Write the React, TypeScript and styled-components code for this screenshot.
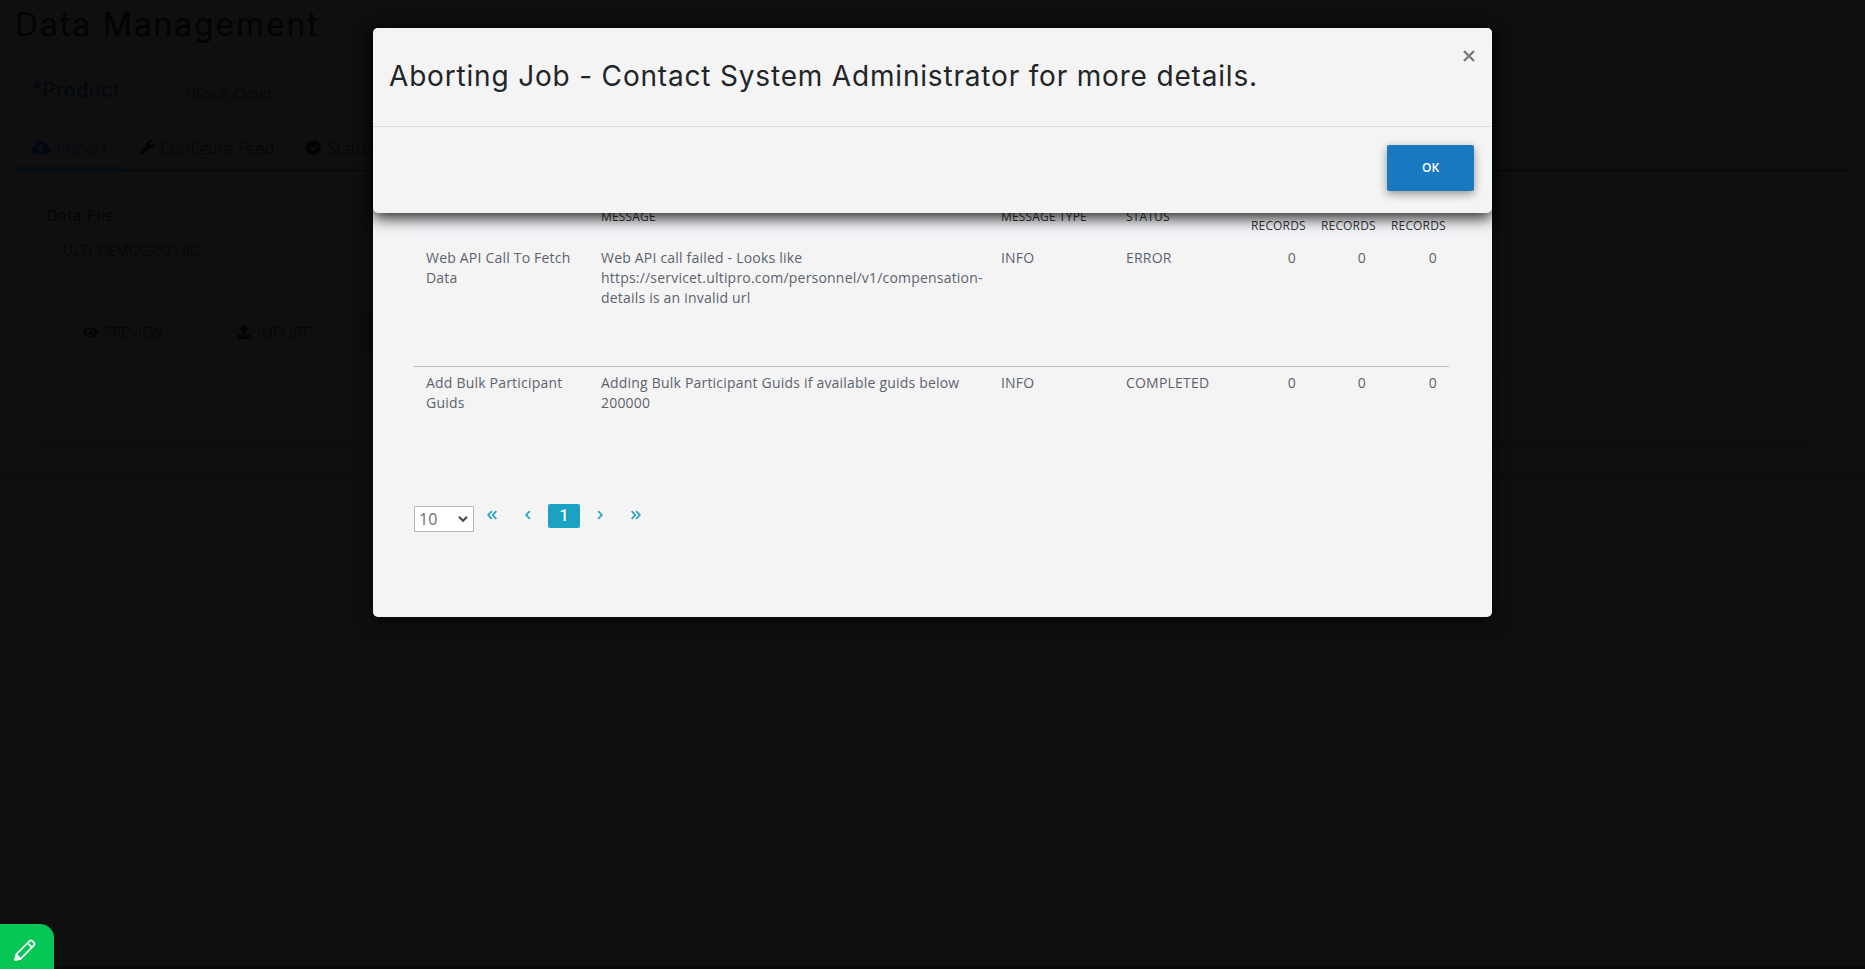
import React from "react";
import styled, { createGlobalStyle } from "styled-components";
import { FaCloudUploadAlt, FaWrench, FaCheckCircle, FaEye, FaUpload } from "react-icons/fa";

const GlobalStyle = createGlobalStyle`
  * { box-sizing: border-box; }
  html, body { margin: 0; background: #0f0f0f; overflow: hidden; }
  body { font-family: "Open Sans", "Noto Sans", sans-serif; }
`;

const Screen = styled.div`
  position: relative;
  width: 100vw;
  height: 100vh;
  overflow: hidden;
  background: #0f0f0f;
  color: #030303;
  box-shadow: inset 0 -2px 0 #090909;
`;

const Page = styled.main`
  height: 479px;
  padding: 0 16px;
  border-bottom: 2px solid #0c0c0c;
`;

const PageTitle = styled.h1`
  margin: 0;
  height: 66px;
  font: 400 32px/50px Inter, sans-serif;
  letter-spacing: 1.85px;
  text-indent: -1px;
`;

const ProductRow = styled.div`
  display: flex;
  height: 60px;
  padding-left: 16px;
`;

const ProductLabel = styled.label`
  width: 154px;
  font: 400 20px/48px Inter, sans-serif;
  letter-spacing: 0.5px;
  color: #02060d;
`;

const ProductValue = styled.span`
  font: 300 14px/56px "Open Sans", sans-serif;
  letter-spacing: 0.3px;
`;

const TabBar = styled.nav`
  display: flex;
  height: 45px;
  border-bottom: 1px solid #060606;
`;

const Tab = styled.div<{ $active?: boolean }>`
  display: flex;
  align-items: center;
  gap: 6px;
  height: 45px;
  padding: 2px 16px 0;
  font-size: 16px;
  font-weight: 300;
  letter-spacing: 0.32px;
  color: ${(p) => (p.$active ? "#020812" : "#030303")};
  border-bottom: ${(p) => (p.$active ? "4px solid #040b14" : "4px solid transparent")};
  svg { flex: none; }
`;

const FormPanel = styled.section`
  padding: 30px 41px 0 24px;
  height: 275px;
`;

const FieldLabel = styled.div`
  padding-left: 7px;
  font: 300 15px/30px Inter, sans-serif;
  letter-spacing: 0.8px;
`;

const FieldValue = styled.div`
  padding-left: 23px;
  margin-top: 5px;
  font: 300 14px/30px "Open Sans", sans-serif;
  letter-spacing: 0.27px;
`;

const FormActions = styled.div`
  display: flex;
  gap: 74px;
  height: 54px;
  margin-top: 47px;
  padding-left: 43px;
`;

const ActionLink = styled.div`
  display: flex;
  align-items: center;
  gap: 6px;
  height: 38px;
  font-size: 14px;
  font-weight: 300;
  letter-spacing: 0.4px;
`;

const ActionFill = styled.div`
  width: 80px;
  height: 38px;
  margin-left: -24px;
  background: #0c0c0c;
`;

const EmptyPanel = styled.div`
  height: 80px;
  border-top: 2px solid #0c0c0c;
  border-bottom: 2px solid #0c0c0c;
`;

const DetailsDialog = styled.section`
  position: absolute;
  top: 28px;
  left: 373px;
  width: 1119px;
  height: 589px;
  padding: 150px 43px 0 41px;
  border-radius: 5px;
  background: #f4f4f4;
  box-shadow: 0 4px 16px 2px rgba(0, 0, 0, 0.55);
`;

const columns = "175px 400px 125px 125px 70px 70px 70px";

const HeaderRow = styled.div`
  display: grid;
  grid-template-columns: ${columns};
  align-items: center;
  height: 63px;
  background: #f3f4f8;
  color: #333539;
  font-size: 12px;
  line-height: 18px;
  letter-spacing: 0.16px;
  padding-top: 14px;
`;

const HeaderCell = styled.div`
  padding-left: 12px;
  white-space: nowrap;
`;

const BodyRow = styled.div<{ $last?: boolean }>`
  display: grid;
  grid-template-columns: ${columns};
  height: ${(p) => (p.$last ? 135 : 126)}px;
  padding-top: ${(p) => (p.$last ? 6 : 7)}px;
  border-bottom: 1px solid ${(p) => (p.$last ? "transparent" : "#b9bbbd")};
  color: #5c636e;
  font-size: 14px;
  line-height: 20px;
  letter-spacing: 0.2px;
`;

const Cell = styled.div<{ $numeric?: boolean }>`
  padding: 0 ${(p) => (p.$numeric ? 13 : 0)}px 0 12px;
  text-align: ${(p) => (p.$numeric ? "right" : "left")};
  white-space: pre-line;
  &:last-child { padding-right: 12px; }
`;

const Paginator = styled.footer`
  display: flex;
  align-items: flex-start;
  padding-top: 2px;
`;

const PageSize = styled.div`
  display: flex;
  align-items: center;
  justify-content: space-between;
  width: 60px;
  height: 26px;
  margin-top: 2px;
  padding: 0 5px 0 4px;
  border: 1px solid #b8b8b8;
  background: #fff;
  color: #6a6d72;
  font-size: 16px;
  line-height: 24px;
`;

const PageButton = styled.button`
  display: flex;
  align-items: center;
  justify-content: center;
  width: 36px;
  height: 22px;
  padding: 0;
  border: 0;
  background: none;
  color: #2aa0c6;
`;

const CurrentPage = styled(PageButton)`
  width: 32px;
  height: 24px;
  margin: 0 2px;
  border-radius: 2px;
  background: #1ba1c1;
  color: #fff;
  font: 500 16px/24px Roboto, sans-serif;
`;

const AlertDialog = styled.section`
  position: absolute;
  top: 28px;
  left: 373px;
  width: 1119px;
  height: 185px;
  border-radius: 5px;
  background: #f4f4f4;
  box-shadow: 0 5px 15px rgba(0, 0, 0, 0.85);
`;

const AlertHeader = styled.header`
  display: flex;
  justify-content: space-between;
  height: 99px;
  padding: 17px 17px 0 16px;
  border-bottom: 1px solid #dadbdc;
`;

const AlertTitle = styled.h2`
  margin: 0;
  font: 400 28px/62px Inter, sans-serif;
  letter-spacing: 0.82px;
  color: #212529;
  white-space: nowrap;
`;

const CloseButton = styled.button`
  width: 12px;
  height: 24px;
  padding: 0;
  border: 0;
  background: none;
  color: #7a7a7a;
`;

const AlertFooter = styled.footer`
  display: flex;
  justify-content: flex-end;
  padding: 18px 18px 0;
`;

const OkButton = styled.button`
  width: 87px;
  height: 46px;
  padding: 0 0 2px;
  border: 0;
  border-radius: 2px;
  background: #1878c0;
  color: #fff;
  font: 600 12px "Open Sans", sans-serif;
  box-shadow: 0 3px 10px rgba(0, 0, 0, 0.4);
`;

const EditButton = styled.button`
  position: absolute;
  left: 0;
  bottom: 0;
  display: flex;
  align-items: center;
  justify-content: center;
  width: 54px;
  height: 45px;
  padding: 6px 5px 0 0;
  border: 0;
  border-radius: 0 14px 0 0;
  background: #06c755;
  color: #fff;
`;

const Chevrons = ({ flip, double }: { flip?: boolean; double?: boolean }) => (
  <svg width={double ? 10 : 6} height="10" viewBox={double ? "0 0 10 10" : "0 0 6 10"} fill="none" stroke="currentColor" strokeWidth="1.7" transform={flip ? "scale(-1 1)" : undefined}>
    <path d="M4.8 1.2 1.2 5l3.6 3.8" />
    {double && <path d="M9.3 1.2 5.7 5l3.6 3.8" />}
  </svg>
);

const rows = [
  ["Web API Call To Fetch Data", "Web API call failed - Looks like\nhttps://servicet.ultipro.com/personnel/v1/compensation-\ndetails is an invalid url", "INFO", "ERROR", "0", "0", "0"],
  ["Add Bulk Participant Guids", "Adding Bulk Participant Guids if available guids below 200000", "INFO", "COMPLETED", "0", "0", "0"],
];

const headers = ["", "MESSAGE", "MESSAGE TYPE", "STATUS", <><br />RECORDS</>, <><br />RECORDS</>, <><br />RECORDS</>];

export default function App() {
  return (
    <Screen>
      <GlobalStyle />
      <Page>
        <PageTitle>Data Management</PageTitle>
        <ProductRow>
          <ProductLabel>*Product</ProductLabel>
          <ProductValue>HRsoft Cloud</ProductValue>
        </ProductRow>
        <TabBar>
          <Tab $active><FaCloudUploadAlt size={19} />Import</Tab>
          <Tab><FaWrench size={15} />Configure Feed</Tab>
          <Tab><FaCheckCircle size={15} />Status</Tab>
        </TabBar>
        <FormPanel>
          <FieldLabel>Data File</FieldLabel>
          <FieldValue>ULTI_DEMOGRAPHIC</FieldValue>
          <FormActions>
            <ActionLink><FaEye size={15} />PREVIEW</ActionLink>
            <ActionLink><FaUpload size={14} />IMPORT</ActionLink>
            <ActionFill />
          </FormActions>
          <EmptyPanel />
        </FormPanel>
      </Page>

      <DetailsDialog>
        <HeaderRow>
          {headers.map((h, i) => <HeaderCell key={i}>{h}</HeaderCell>)}
        </HeaderRow>
        {rows.map((r, i) => (
          <BodyRow key={i} $last={i === 1}>
            {r.map((c, j) => <Cell key={j} $numeric={j > 3}>{c}</Cell>)}
          </BodyRow>
        ))}
        <Paginator>
          <PageSize>
            10
            <svg width="10" height="8" viewBox="0 0 10 8" fill="none" stroke="#444" strokeWidth="2"><path d="M1 1.8 5 5.8 9 1.8" /></svg>
          </PageSize>
          <PageButton><Chevrons double /></PageButton>
          <PageButton><Chevrons /></PageButton>
          <CurrentPage>1</CurrentPage>
          <PageButton><Chevrons flip /></PageButton>
          <PageButton><Chevrons double flip /></PageButton>
        </Paginator>
      </DetailsDialog>

      <AlertDialog>
        <AlertHeader>
          <AlertTitle>Aborting Job - Contact System Administrator for more details.</AlertTitle>
          <CloseButton aria-label="Close">
            <svg width="12" height="12" viewBox="0 0 12 12" fill="none" stroke="currentColor" strokeWidth="2.4"><path d="m1 1 10 10M11 1 1 11" /></svg>
          </CloseButton>
        </AlertHeader>
        <AlertFooter>
          <OkButton>OK</OkButton>
        </AlertFooter>
      </AlertDialog>

      <EditButton aria-label="Edit">
        <svg width="22" height="22" viewBox="0 0 22 22" fill="none" stroke="currentColor" strokeWidth="1.7" strokeLinejoin="round">
          <path d="M1.2 20.8 2.2 15.4 15.6 2Q17 .8 18.6 2.3l1.1 1.1q1.5 1.6.2 3L6.6 19.8Z" />
          <path d="m13.6 4 4.4 4.4M2.2 15.4l4.4 4.4" />
          <path d="M1.2 20.8 1.8 17.6 4.4 20.2Z" fill="currentColor" />
        </svg>
      </EditButton>
    </Screen>
  );
}
